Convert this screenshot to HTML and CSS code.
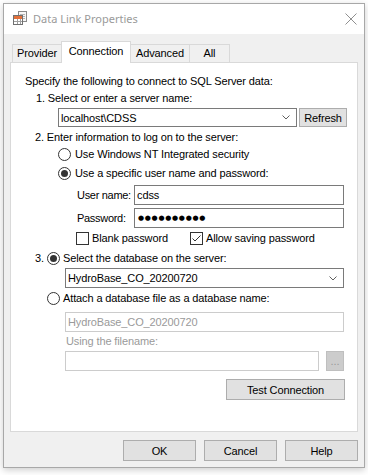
FILE: index.html
```html
<!DOCTYPE html>
<html>
<head>
<meta charset="utf-8">
<title>Data Link Properties</title>
<link rel="stylesheet" href="styles.css">
</head>
<body>
<div class="window">
  <div class="titlebar">
    <svg class="app-icon" width="16" height="16" viewBox="0 0 16 16">
      <rect x="6.5" y="0.5" width="8" height="10" fill="#f7f7f7" stroke="#8a8a8a"/>
      <path d="M8 3.5h5M8 5.5h5M8 7.5h5" stroke="#b4b4b4"/>
      <rect x="1.5" y="4.5" width="9" height="9" fill="#fff" stroke="#707070"/>
      <rect x="2" y="5" width="8" height="3" fill="#e2703a"/>
      <path d="M2 10.5h8M5.5 8v5M8.5 8v5" stroke="#a0a0a0"/>
    </svg>
    <span class="title">Data Link Properties</span>
    <svg class="close" width="12" height="12" viewBox="0 0 12 12">
      <path d="M0.5 0.5L11.5 11.5M11.5 0.5L0.5 11.5" stroke="#8f8f8f" stroke-width="1"/>
    </svg>
  </div>
  <div class="client">
    <div class="tabs">
      <div class="tab tab-provider">Provider</div>
      <div class="tab tab-connection active">Connection</div>
      <div class="tab tab-advanced">Advanced</div>
      <div class="tab tab-all">All</div>
    </div>
    <div class="panel">
      <p class="line intro">Specify the following to connect to SQL Server data:</p>
      <p class="line step1">1. Select or enter a server name:</p>
      <div class="server-row">
        <div class="combo combo-server">
          <span class="value">localhost\CDSS</span>
          <svg class="chev" width="8" height="5" viewBox="0 0 8 5"><path d="M0.5 0.5L4 4L7.5 0.5" fill="none" stroke="#606060"/></svg>
        </div>
        <button class="btn refresh">Refresh</button>
      </div>
      <p class="line step2">2. Enter information to log on to the server:</p>
      <div class="radio-row r1"><span class="radio"></span><span>Use Windows NT Integrated security</span></div>
      <div class="radio-row r2"><span class="radio checked"></span><span>Use a specific user name and password:</span></div>
      <div class="field-row fr-user"><span class="flabel">User name:</span><div class="input">cdss</div></div>
      <div class="field-row fr-pass"><span class="flabel">Password:</span><div class="input pw">●●●●●●●●●●</div></div>
      <div class="check-row">
        <div class="check-item check-blank"><span class="checkbox"></span><span>Blank password</span></div>
        <div class="check-item"><span class="checkbox"><svg width="11" height="11" viewBox="0 0 11 11"><path d="M1.5 5.5L4 8L9.5 2.5" fill="none" stroke="#333"/></svg></span><span>Allow saving password</span></div>
      </div>
      <div class="step3-row"><span class="num">3.</span><span class="radio checked"></span><span>Select the database on the server:</span></div>
      <div class="combo combo-db">
        <span class="value">HydroBase_CO_20200720</span>
        <svg class="chev" width="8" height="5" viewBox="0 0 8 5"><path d="M0.5 0.5L4 4L7.5 0.5" fill="none" stroke="#606060"/></svg>
      </div>
      <div class="attach-row"><span class="radio"></span><span>Attach a database file as a database name:</span></div>
      <div class="input disabled dbname">HydroBase_CO_20200720</div>
      <p class="line using">Using the filename:</p>
      <div class="file-row">
        <div class="input disabled file"></div>
        <button class="btn browse" disabled>...</button>
      </div>
      <div class="test-row"><button class="btn test">Test Connection</button></div>
    </div>
    <div class="buttons">
      <button class="btn">OK</button>
      <button class="btn">Cancel</button>
      <button class="btn">Help</button>
    </div>
  </div>
</div>
</body>
</html>
```
FILE: styles.css
```css
* { box-sizing: border-box; }
html, body { margin: 0; padding: 0; }
body {
  background: #ffffff;
  width: 368px;
  height: 475px;
  overflow: hidden;
  font-family: "Liberation Sans", Arial, sans-serif;
  font-size: 11px;
  letter-spacing: -0.12px;
  color: #000;
}
.window {
  margin: 3px 0 0 3px;
  width: 362px;
  height: 465px;
  border: 1px solid #a8a8a8;
  background: #f0f0f0;
  display: flex;
  flex-direction: column;
  box-shadow: 0 2px 7px rgba(0, 0, 0, 0.2);
}
.titlebar {
  height: 30px;
  flex: none;
  background: #fff;
  display: flex;
  align-items: center;
  padding-left: 8px;
}
.app-icon { display: block; flex: none; }
.title {
  margin-left: 5px;
  margin-top: -1px;
  font-family: "Noto Sans", sans-serif;
  font-size: 11px;
  letter-spacing: 0;
  color: #9a9a9a;
}
.close { display: block; margin-left: auto; margin-right: 7px; margin-top: -1px; }
.client { flex: 1; padding: 7px 6px 0 6px; }
.tabs {
  display: flex;
  align-items: flex-end;
  height: 21px;
  padding-left: 2px;
}
.tab {
  height: 18px;
  border: 1px solid #d9d9d9;
  border-bottom: none;
  background: #f0f0f0;
  line-height: 17px;
  text-align: center;
  margin-left: -1px;
}
.tab-provider { width: 50px; margin-left: 0; }
.tab-connection { width: 70px; }
.tab-advanced { width: 60px; }
.tab-all { width: 41px; }
.tab.active {
  height: 22px;
  margin-bottom: -1px;
  background: #fff;
  position: relative;
  z-index: 1;
  line-height: 14px;
  padding-top: 2px;
}
.panel {
  width: 348px;
  height: 370px;
  border: 1px solid #d9d9d9;
  background: #fff;
  display: flex;
  flex-direction: column;
  align-items: flex-start;
}
.line { margin: 0; line-height: 13px; }
.intro { margin: 12px 0 0 14px; }
.step1 { margin: 4px 0 0 25px; }
.server-row { display: flex; gap: 2px; height: 19px; margin: 3px 0 0 47px; }
.combo {
  display: flex;
  align-items: center;
  border: 1px solid #7a7a7a;
  background: #fff;
  padding-left: 2px;
}
.combo .value { flex: 1; }
.combo-server { width: 239px; height: 19px; }
.chev { display: block; margin-right: 6px; }
.btn {
  font: inherit;
  letter-spacing: inherit;
  color: #000;
  background: #e1e1e1;
  border: 1px solid #adadad;
  border-radius: 0;
  padding: 0;
  margin: 0;
}
.refresh { width: 48px; height: 19px; }
.step2 { margin: 4px 0 0 24px; }
.radio-row {
  display: flex;
  align-items: center;
  gap: 4px;
  margin-left: 47px;
  line-height: 13px;
}
.r1 { margin-top: 4px; }
.r2 { margin-top: 6px; }
.radio {
  width: 13px;
  height: 13px;
  flex: none;
  border: 1px solid #333;
  border-radius: 50%;
  background: #fff;
  display: flex;
  align-items: center;
  justify-content: center;
}
.radio.checked::after {
  content: "";
  width: 7px;
  height: 7px;
  border-radius: 50%;
  background: #333;
}
.field-row { display: flex; align-items: center; margin-left: 66px; }
.fr-user { margin-top: 5px; }
.fr-pass { margin-top: 3px; }
.flabel { width: 57px; line-height: 13px; letter-spacing: -0.3px; }
.input {
  width: 210px;
  height: 20px;
  border: 1px solid #7a7a7a;
  background: #fff;
  padding-left: 2px;
  line-height: 18px;
}
.pw {
  font-family: "DejaVu Sans", sans-serif;
  font-size: 7px;
  letter-spacing: 0.7px;
  padding-left: 3px;
}
.check-row { display: flex; margin: 4px 0 0 65px; line-height: 13px; }
.check-item { display: flex; align-items: center; gap: 3px; }
.check-blank { width: 114px; }
.checkbox {
  width: 13px;
  height: 13px;
  flex: none;
  border: 1px solid #333;
  background: #fff;
  display: flex;
}
.checkbox svg { display: block; }
.step3-row { display: flex; align-items: center; margin: 7px 0 0 24px; line-height: 13px; }
.num { width: 12px; }
.step3-row .radio { margin-right: 3px; }
.combo-db { width: 279px; height: 20px; margin: 3px 0 0 54px; }
.attach-row { display: flex; align-items: center; gap: 3px; margin: 4px 0 0 36px; line-height: 13px; }
.input.disabled { border-color: #cccccc; color: #9a9a9a; }
.dbname { width: 279px; margin: 7px 0 0 54px; }
.using { margin: 3px 0 0 55px; color: #9a9a9a; }
.file-row { display: flex; gap: 7px; margin: 3px 0 0 54px; }
.file { width: 254px; }
.browse {
  width: 18px;
  height: 20px;
  background: #cccccc;
  border-color: #bfbfbf;
  color: #9a9a9a;
}
.test-row { align-self: flex-end; margin: 8px 12px 0 0; }
.test { width: 119px; height: 21px; }
.buttons { display: flex; justify-content: flex-end; gap: 8px; margin-top: 8px; }
.buttons .btn { width: 73px; height: 21px; }
```
